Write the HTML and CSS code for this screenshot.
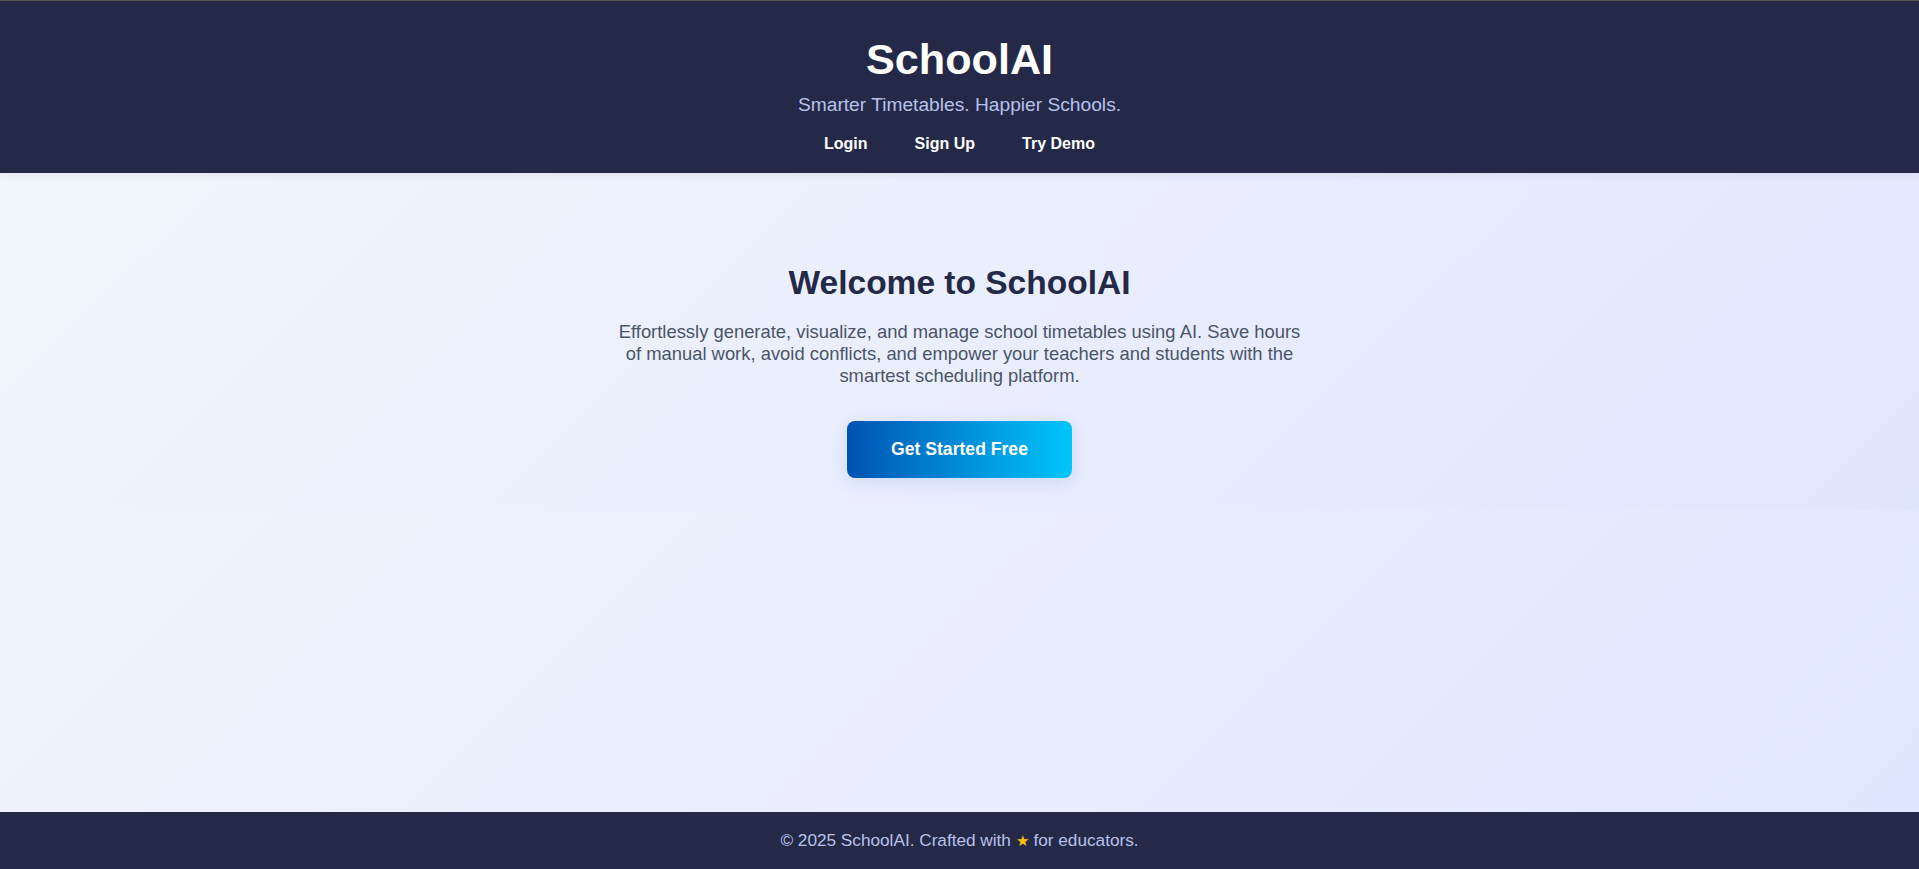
FILE: index.html
```html
<!DOCTYPE html>
<html lang="en">
<head>
<meta charset="utf-8">
<title>SchoolAI</title>
<link rel="stylesheet" href="styles.css">
</head>
<body>
  <header class="site-header">
    <h1 class="brand">SchoolAI</h1>
    <p class="tagline">Smarter Timetables. Happier Schools.</p>
    <nav class="nav">
      <a href="#" class="nav-link">Login</a>
      <a href="#" class="nav-link">Sign Up</a>
      <a href="#" class="nav-link">Try Demo</a>
    </nav>
  </header>
  <main class="main">
    <section class="hero">
      <h2 class="hero-title">Welcome to SchoolAI</h2>
      <p class="hero-text">Effortlessly generate, visualize, and manage school timetables using AI. Save hours of manual work, avoid conflicts, and empower your teachers and students with the smartest scheduling platform.</p>
      <a href="#" class="cta">Get Started Free</a>
    </section>
  </main>
  <footer class="site-footer">
    <p class="footer-text">© 2025 SchoolAI. Crafted with <span class="star">★</span> for educators.</p>
  </footer>
</body>
</html>
```

FILE: styles.css
```css
* { box-sizing: border-box; }

html, body { height: 100%; }

body {
  margin: 0;
  min-height: 100vh;
  display: flex;
  flex-direction: column;
  font-family: "Liberation Sans", Arial, sans-serif;
  background: linear-gradient(135deg, #f4f8fc 0%, #e0e6ff 100%);
}

.site-header {
  background: #242947;
  border-top: 1px solid #555555;
  padding: 34px 16px 20px;
  text-align: center;
  box-shadow: 0 2px 8px rgba(35, 41, 70, 0.08);
  position: relative;
  z-index: 1;
}

.brand {
  margin: 0;
  font-size: 43.2px;
  font-weight: 700;
  color: #ffffff;
  line-height: 48px;
}

.tagline {
  margin: 11px 0 0;
  font-size: 19.2px;
  color: #b8c1ec;
  line-height: 21px;
}

.nav {
  margin-top: 20px;
  display: flex;
  justify-content: center;
  gap: 47px;
}

.nav-link {
  color: #ffffff;
  text-decoration: none;
  font-weight: 700;
  font-size: 16px;
  line-height: 18px;
}

.main {
  flex: 1;
  display: flex;
  flex-direction: column;
}

.hero {
  background: linear-gradient(135deg, #f2f6fc 0%, #e1e6ff 100%);
  padding: 91px 16px 32px;
  display: flex;
  flex-direction: column;
  align-items: center;
  text-align: center;
}

.hero-title {
  margin: 0;
  font-size: 33.5px;
  font-weight: 700;
  color: #232946;
  line-height: 38px;
}

.hero-text {
  margin: 19px 0 0;
  max-width: 700px;
  font-size: 18.4px;
  line-height: 22px;
  color: #4a5568;
}

.cta {
  margin-top: 34px;
  display: inline-block;
  padding: 18px 44px;
  border-radius: 8px;
  background: linear-gradient(90deg, #0053b3 0%, #00c6fb 100%);
  color: #ffffff;
  font-weight: 700;
  font-size: 17.6px;
  line-height: 21px;
  text-decoration: none;
  box-shadow: 0 4px 18px rgba(0, 83, 179, 0.12);
}

.site-footer {
  background: #242947;
  padding: 19px 16px;
  text-align: center;
}

.footer-text {
  margin: 0;
  color: #b8c1ec;
  font-size: 17.2px;
  line-height: 19px;
  height: 19px;
}

.star {
  color: #ffc107;
  font-size: 15px;
  line-height: 0;
}
```
